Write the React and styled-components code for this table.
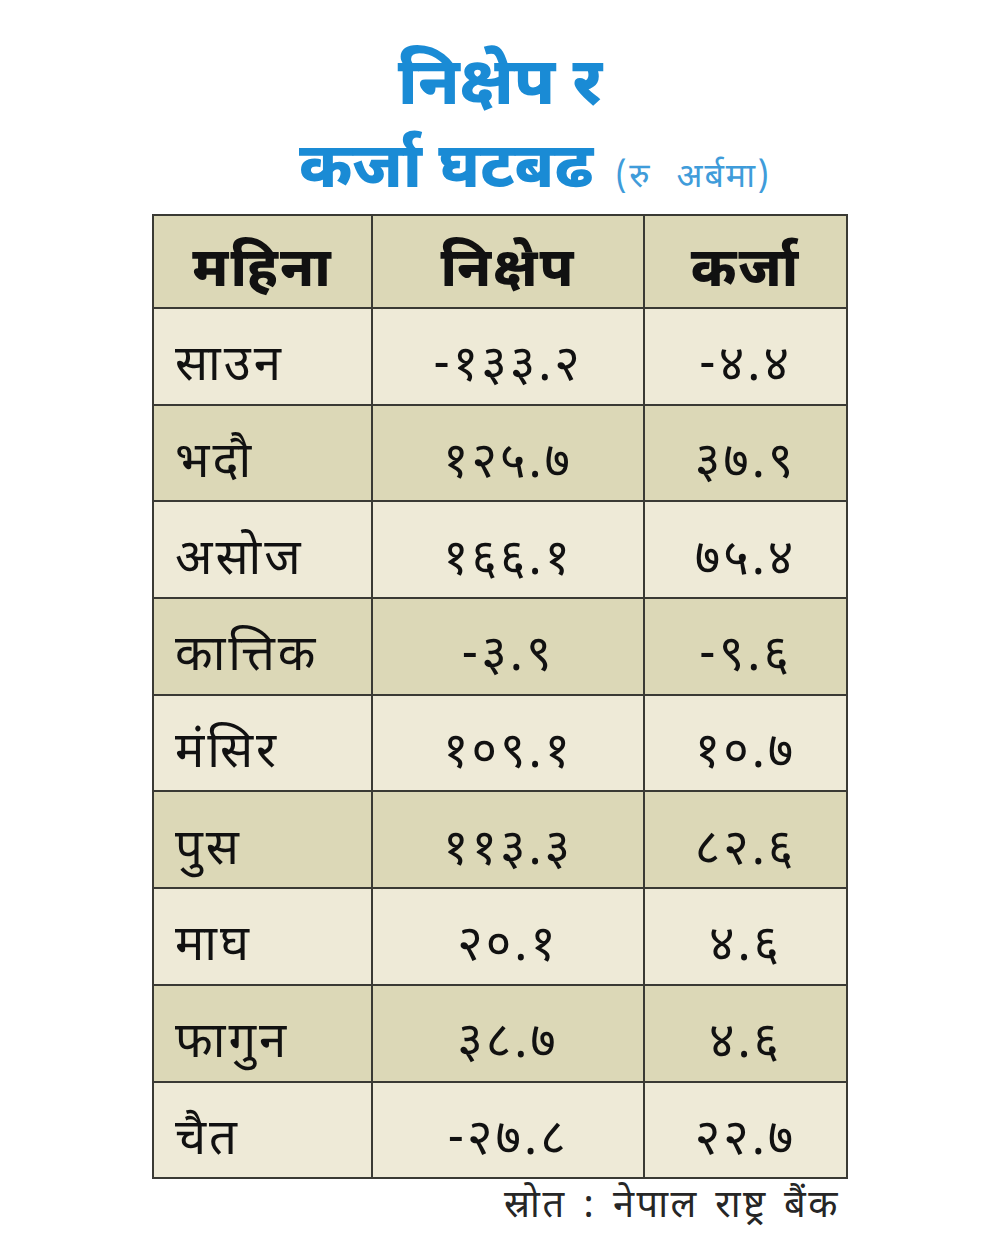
import React from "react";
import styled, { createGlobalStyle } from "styled-components";

const Global = createGlobalStyle`
  html, body { margin: 0; padding: 0; background: #ffffff; }
  body { font-family: "Noto Sans Devanagari", "Lohit Devanagari", "Noto Sans", "DejaVu Sans", sans-serif; }
`;

const Page = styled.div`
  width: 1000px;
  height: 1250px;
  display: flex;
  flex-direction: column;
  align-items: center;
  padding-top: 46px;
  box-sizing: border-box;
`;

const TitleLine = styled.div`
  color: #1a8bd5;
  font-weight: 800;
  font-size: ${(p) => p.size}px;
  line-height: 84px;
  height: 84px;
  display: flex;
  align-items: baseline;
  gap: 22px;
  margin-left: ${(p) => p.shift || 0}px;
`;

const Unit = styled.span`
  font-size: 34px;
  font-weight: 400;
  color: #3f9cda;
  letter-spacing: 2px;
  word-spacing: 14px;
`;

const Table = styled.div`
  margin-top: 0;
  width: 696px;
  display: grid;
  grid-template-columns: 217px 270px 201px;
  border: 2px solid #3a3a34;
  box-sizing: border-box;
  background: #3a3a34;
  gap: 2px;
`;

const Cell = styled.div`
  height: ${(p) => (p.head ? 91 : 94.7)}px;
  box-sizing: border-box;
  padding-top: ${(p) => (p.head ? 22 : 24)}px;
  background: ${(p) => (p.dark ? "#dcd8b7" : "#eeead7")};
  display: flex;
  align-items: center;
  justify-content: ${(p) => (p.left ? "flex-start" : "center")};
  padding-left: ${(p) => (p.left ? "21px" : "0")};
  font-size: ${(p) => (p.head ? 54 : 49)}px;
  letter-spacing: ${(p) => (p.head ? 2 : 3)}px;
  font-weight: ${(p) => (p.head ? 800 : 400)};
  color: #111;
  white-space: nowrap;
`;

const Source = styled.div`
  width: 696px;
  box-sizing: border-box;
  padding-right: 8px;
  text-align: right;
  font-size: 38px;
  letter-spacing: 2.5px;
  word-spacing: 4px;
  color: #262626;
  margin-top: 4px;
`;

const rows = [
  ["साउन", "-१३३.२", "-४.४"],
  ["भदौ", "१२५.७", "३७.९"],
  ["असोज", "१६६.१", "७५.४"],
  ["कात्तिक", "-३.९", "-९.६"],
  ["मंसिर", "१०९.१", "१०.७"],
  ["पुस", "११३.३", "८२.६"],
  ["माघ", "२०.१", "४.६"],
  ["फागुन", "३८.७", "४.६"],
  ["चैत", "-२७.८", "२२.७"],
];

export default function App() {
  return (
    <Page>
      <Global />
      <TitleLine size={66}>निक्षेप र</TitleLine>
      <TitleLine size={63} shift={70}>
        <span>कर्जा घटबढ</span>
        <Unit>(रु अर्बमा)</Unit>
      </TitleLine>
      <Table>
        <Cell head dark>महिना</Cell>
        <Cell head dark>निक्षेप</Cell>
        <Cell head dark>कर्जा</Cell>
        {rows.map((r, i) => {
          const dark = i % 2 === 1;
          return (
            <React.Fragment key={r[0]}>
              <Cell left dark={dark}>{r[0]}</Cell>
              <Cell dark={dark}>{r[1]}</Cell>
              <Cell dark={dark}>{r[2]}</Cell>
            </React.Fragment>
          );
        })}
      </Table>
      <Source>स्रोत : नेपाल राष्ट्र बैंक</Source>
    </Page>
  );
}
